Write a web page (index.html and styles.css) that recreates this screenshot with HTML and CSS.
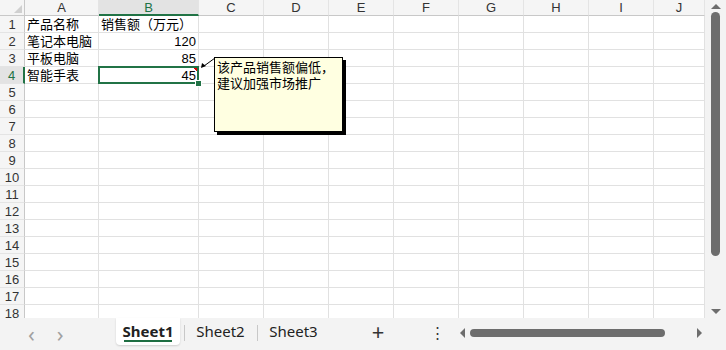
FILE: index.html
```html
<!DOCTYPE html>
<html lang="zh-CN">
<head>
    <meta charset="UTF-8">
    <meta name="viewport" content="width=device-width, initial-scale=1.0">
    <title>销售额</title>
    <link rel="stylesheet" href="styles.css">
</head>
<body>
    <div class="main">
        <div class="sheet" id="sheet">
            <div class="comment">该产品销售额偏低，<br>建议加强市场推广</div>
            <svg class="pointer" width="20" height="16" viewBox="0 0 20 16">
                <line x1="16" y1="2" x2="5" y2="10" stroke="#000" stroke-width="1"/>
                <polygon points="2,12 3,7 7,10" fill="#000"/>
            </svg>
        </div>
        <div class="vscroll">
            <span class="arrow up"></span>
            <div class="vthumb"></div>
            <span class="arrow down"></span>
        </div>
    </div>

    <div class="tabbar">
        <div class="nav">
            <span>&lsaquo;</span>
            <span>&rsaquo;</span>
        </div>
        <div class="tab current">Sheet1</div>
        <div class="tab">Sheet2</div>
        <div class="tab">Sheet3</div>
        <div class="add">+</div>
        <div class="more">&#8942;</div>
        <div class="hscroll">
            <span class="arrow left"></span>
            <div class="hthumb"></div>
            <span class="arrow right"></span>
        </div>
    </div>

    <script>
        const columns = ['A', 'B', 'C', 'D', 'E', 'F', 'G', 'H', 'I', 'J'];
        const data = {
            1: ['产品名称', '销售额（万元）'],
            2: ['笔记本电脑', 120],
            3: ['平板电脑', 85],
            4: ['智能手表', 45],
        };

        function renderSheet() {
            const sheet = document.getElementById('sheet');

            const corner = document.createElement('div');
            corner.className = 'cell corner';
            sheet.appendChild(corner);

            columns.forEach(col => {
                const div = document.createElement('div');
                div.className = 'cell col-head' + (col === 'B' ? ' sel' : '');
                div.textContent = col;
                sheet.appendChild(div);
            });

            for (let r = 1; r <= 18; r++) {
                const head = document.createElement('div');
                head.className = 'cell row-head' + (r === 4 ? ' sel' : '');
                head.textContent = r;
                sheet.appendChild(head);

                const row = data[r] || [];
                columns.forEach((col, i) => {
                    const div = document.createElement('div');
                    div.className = 'cell';
                    const value = row[i];
                    if (value !== undefined) {
                        div.textContent = value;
                        if (typeof value === 'number') div.classList.add('num');
                    }
                    if (r === 4 && col === 'B') div.classList.add('picked', 'has-note');
                    sheet.appendChild(div);
                });
            }
        }

        renderSheet();
    </script>
</body>
</html>
```

FILE: styles.css
```css
body { margin: 0; width: 726px; height: 350px; overflow: hidden; background: #f3f3f3; font-family: "Liberation Sans", "Noto Sans CJK SC", sans-serif; color: #000; }
.main { display: flex; height: 318px; }
.sheet { position: relative; width: 705px; height: 318px; overflow: hidden; background: #fff; display: grid; grid-template-columns: 25px 74px 100px repeat(7, 65px) 51px; grid-template-rows: 16px; grid-auto-rows: 17px; }
.cell { box-sizing: border-box; border-right: 1px solid #e1e1e1; border-bottom: 1px solid #e1e1e1; font-size: 13px; line-height: 18px; padding: 0 2px; white-space: nowrap; overflow: visible; position: relative; }
.cell.num { text-align: right; }
.corner, .col-head, .row-head { background: #f5f5f5; color: #333; text-align: center; padding: 0; }
.col-head { border-bottom-color: #c8c8c8; border-right-color: #e4e4e4; line-height: 16px; }
.row-head { border-right-color: #c8c8c8; border-bottom-color: #e4e4e4; }
.corner { border-right-color: #c8c8c8; border-bottom-color: #c8c8c8; }
.corner::after { content: ""; position: absolute; right: 2px; bottom: 2px; border-left: 8px solid transparent; border-bottom: 8px solid #d0d0d0; }
.col-head.sel { background: #e3e3e3; color: #217346; border-bottom: 2px solid #217346; }
.row-head.sel { background: #e3e3e3; color: #217346; border-right: 2px solid #217346; }
.picked::after { content: ""; position: absolute; left: -1px; top: -1px; right: -1px; bottom: -1px; border: 2px solid #217346; }
.picked::before { content: ""; position: absolute; right: -4px; bottom: -4px; width: 5px; height: 5px; background: #217346; border: 1px solid #fff; z-index: 2; }
.has-note { background-image: linear-gradient(225deg, #e00000 4px, transparent 4px); background-repeat: no-repeat; }
.comment { position: absolute; left: 214px; top: 57px; width: 129px; height: 75px; box-sizing: border-box; border: 1px solid #000; background: #ffffe1; box-shadow: 3px 3px 0 #000; font-size: 13px; line-height: 16px; padding: 2px 2px; z-index: 3; white-space: nowrap; }
.pointer { position: absolute; left: 199px; top: 56px; z-index: 3; }
.vscroll { width: 21px; display: flex; flex-direction: column; align-items: center; background: #f3f3f3; }
.vthumb { width: 9px; height: 244px; border-radius: 5px; background: #6d6d6d; margin: 3px 0 auto; }
.arrow { width: 0; height: 0; border: 5px solid transparent; }
.arrow.up { border-bottom-color: #6d6d6d; border-top-width: 0; margin-top: 4px; }
.arrow.down { border-top-color: #6d6d6d; border-bottom-width: 0; margin-bottom: 4px; }
.arrow.left { border-right-color: #6d6d6d; border-left-width: 0; }
.arrow.right { border-left-color: #6d6d6d; border-right-width: 0; }
.tabbar { height: 32px; display: flex; align-items: flex-start; font-family: "Noto Sans", "Liberation Sans", sans-serif; font-size: 15px; color: #222; }
.nav { width: 116px; display: flex; gap: 22px; padding: 4px 0 0 28px; box-sizing: border-box; color: #a0a0a0; font-size: 22px; line-height: 22px; }
.tab { width: 73px; height: 27px; line-height: 26px; text-align: center; position: relative; }
.tab + .tab::before { content: ""; position: absolute; left: 0; top: 7px; height: 16px; border-left: 1px solid #c8c8c8; }
.tab:last-of-type::after { content: ""; position: absolute; right: 0; top: 7px; height: 16px; border-left: 1px solid #c8c8c8; }
.tab.current { width: 64px; background: #fff; font-weight: bold; border-radius: 0 0 4px 4px; box-shadow: 0 1px 2px rgba(0,0,0,0.15); margin-right: 4px; }
.tab.current::after { content: ""; position: absolute; left: 8px; right: 8px; bottom: 3px; border-bottom: 2px solid #1e6e42; }
.add { width: 96px; text-align: center; font-size: 22px; line-height: 27px; color: #333; }
.more { width: 22px; text-align: center; font-size: 15px; line-height: 28px; color: #333; }
.hscroll { flex: 1; display: flex; align-items: center; height: 30px; padding: 0 24px 0 12px; }
.hthumb { width: 195px; height: 8px; border-radius: 4px; background: #6d6d6d; margin: 0 auto 0 5px; }
```
